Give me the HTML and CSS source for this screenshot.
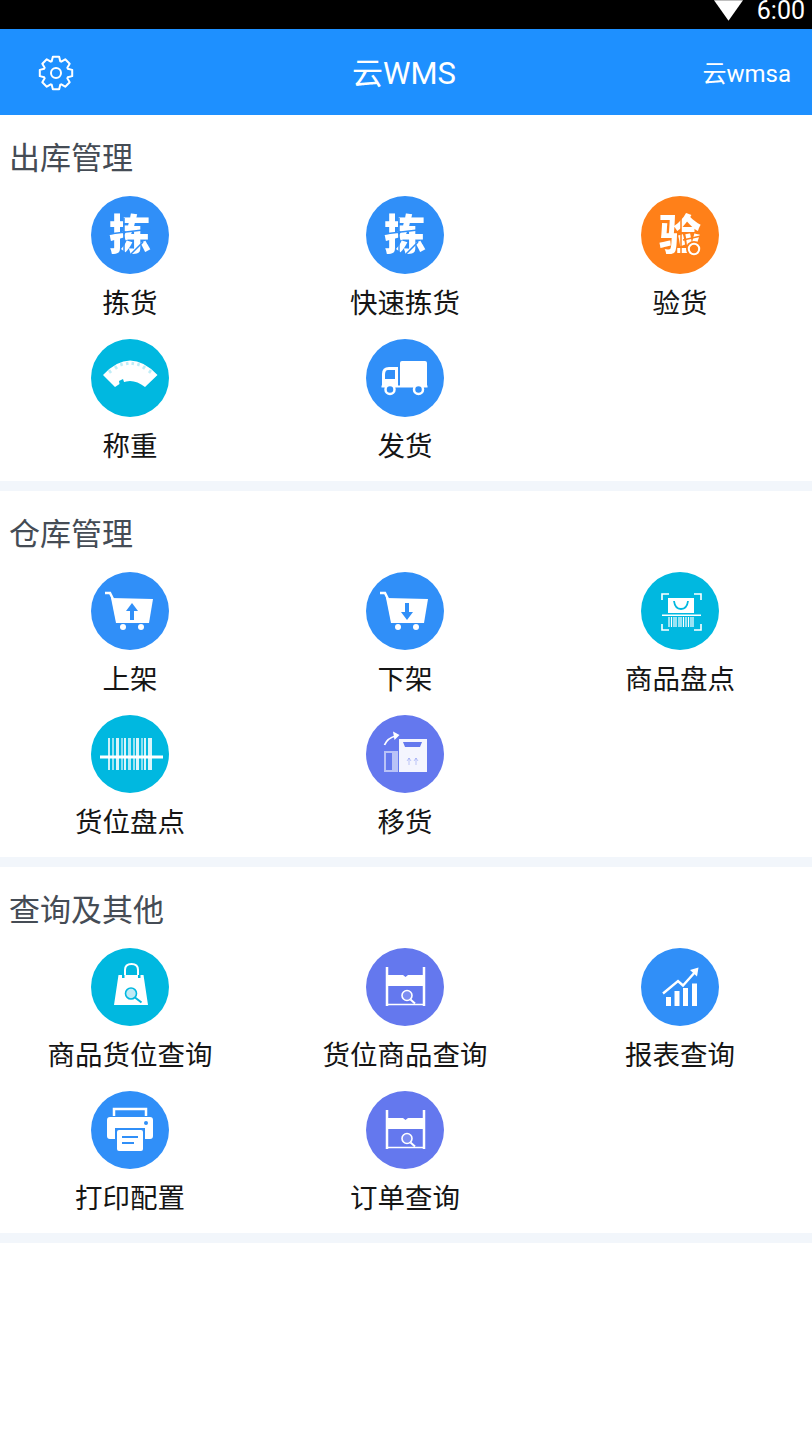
FILE: index.html
```html
<!DOCTYPE html>
<html lang="zh-CN">
<head>
<meta charset="utf-8">
<title>云WMS</title>
<link rel="stylesheet" href="styles.css">
</head>
<body>
<svg class="defs" width="0" height="0" aria-hidden="true">
  <defs>
    <symbol id="i-truck" viewBox="0 0 78 78">
      <path d="M34 24a2 2 0 0 1 2-2h23a2 2 0 0 1 2 2v24H34z" fill="#fff"/>
      <path fill-rule="evenodd" d="M23 28h9v20H16V35q0-7 7-7zm-1 3q-3 0-3 5v4h10v-9z" fill="#fff"/>
      <rect x="15.500" y="46.500" width="46" height="2" fill="#fff"/>
      <circle cx="24" cy="50.500" r="4.500" fill="#308ff8" stroke="#fff" stroke-width="2.500"/>
      <circle cx="52.500" cy="50.500" r="4.500" fill="#308ff8" stroke="#fff" stroke-width="2.500"/>
    </symbol>
    <symbol id="i-scale" viewBox="0 0 78 78">
      <path d="M12 36Q39 7 66.500 36L54 48Q39 36 24 48z" fill="#fff"/>
      <g stroke="#00b8e0" stroke-opacity=".25" stroke-width="2.500">
        <path d="M18 31l2 3M24 27l2 3M30 24l1 3M36 23l.5 3M42 23l-.5 3M48 24l-1 3M54 27l-2 3M60 31l-2 3"/>
      </g>
      <path d="M28 42l4-2 2 6-5 2z" fill="#00b8e0"/>
    </symbol>
    <symbol id="i-cart-up" viewBox="0 0 78 78">
      <path d="M14 21h5l3 6" fill="none" stroke="#fff" stroke-width="2.500"/>
      <path d="M20 26l42 1-4 24H25z" fill="#fff"/>
      <circle cx="32" cy="55" r="3" fill="#fff"/>
      <circle cx="50" cy="55" r="3" fill="#fff"/>
      <path d="M41 31l6 8h-4v9h-4v-9h-4z" fill="#308ff8"/>
    </symbol>
    <symbol id="i-cart-down" viewBox="0 0 78 78">
      <path d="M14 21h5l3 6" fill="none" stroke="#fff" stroke-width="2.500"/>
      <path d="M20 26l42 1-4 24H25z" fill="#fff"/>
      <circle cx="32" cy="55" r="3" fill="#fff"/>
      <circle cx="50" cy="55" r="3" fill="#fff"/>
      <path d="M41 48l6-8h-4v-9h-4v9h-4z" fill="#308ff8"/>
    </symbol>
    <symbol id="i-scan" viewBox="0 0 78 78">
      <path d="M21 28v-6h7M53 22h7v6M21 52v6h7M53 58h7v-6" fill="none" stroke="#fff" stroke-width="1.600"/>
      <path d="M27 26h26v15H27z" fill="#fff"/>
      <path d="M33 29q1 8 7 8t7-8" fill="none" stroke="#00b8e0" stroke-width="1.800"/>
      <rect x="21" y="42.500" width="39" height="1.500" fill="#fff"/>
      <path d="M28 45v10M30.500 45v10M33 45v10M35 45v10M38 45v10M40 45v10M42.500 45v10M45 45v10M47.500 45v10M50 45v10M52 45v10" stroke="#fff" stroke-width="1.200"/>
    </symbol>
    <symbol id="i-barcode" viewBox="0 0 78 78">
      <g fill="#fff">
        <rect x="17" y="23" width="2" height="32" opacity=".8"/>
        <rect x="21" y="23" width="2" height="32" opacity=".6"/>
        <rect x="25" y="23" width="3" height="32" opacity=".85"/>
        <rect x="30" y="23" width="2" height="32" opacity=".55"/>
        <rect x="33" y="23" width="2" height="32" opacity=".85"/>
        <rect x="37" y="23" width="3" height="32" opacity=".7"/>
        <rect x="42" y="23" width="2" height="32" opacity=".6"/>
        <rect x="45" y="23" width="3" height="32" opacity=".85"/>
        <rect x="50" y="23" width="2" height="32" opacity=".55"/>
        <rect x="53" y="23" width="2" height="32" opacity=".85"/>
        <rect x="57" y="23" width="4" height="32" opacity=".85"/>
        <rect x="9" y="40.500" width="63" height="3"/>
      </g>
    </symbol>
    <symbol id="i-move" viewBox="0 0 78 78">
      <path d="M33 24h28v33H33z" fill="#fff" fill-opacity=".93"/>
      <path d="M37 27h19l-2 5H39z" fill="#6478ee"/>
      <path d="M18 36h14v21H18z" fill="#fff" fill-opacity=".55"/>
      <path d="M20 38h6v17h-6z" fill="#6478ee"/>
      <path d="M42 46l2-3 2 3M44 43v7M49 46l2-3 2 3M51 43v7" fill="none" stroke="#6478ee" stroke-opacity=".5" stroke-width=".8" transform="translate(-1 0)"/>
      <path d="M18.500 30q3-7 11-9" fill="none" stroke="#fff" stroke-width="1.800"/>
      <path d="M27 16.500l6.500 3.500-5 5z" fill="#fff"/>
    </symbol>
    <symbol id="i-bag" viewBox="0 0 78 78">
      <path d="M34 27v-5q0-6 6.500-6t6.500 6v5" fill="none" stroke="#fff" stroke-width="2"/>
      <path d="M27.500 27H31v3h2.500v-3H47v3h2.500v-3h3L57 57H23z" fill="#fff"/>
      <circle cx="40" cy="45.500" r="5.500" fill="#bfeaf5" stroke="#00b8e0" stroke-width="1.600"/>
      <path d="M44 49.500l6.500 5" stroke="#00b8e0" stroke-width="2"/>
    </symbol>
    <symbol id="i-shelf" viewBox="0 0 78 78">
      <path d="M21 19v39M58 19v39" stroke="#fff" stroke-width="2.500"/>
      <path d="M21 27h16l2.500 2 2.500-2h16v11H21z" fill="#fff"/>
      <path d="M21 56.500h37" stroke="#fff" stroke-width="1.600"/>
      <circle cx="41" cy="47.500" r="5" fill="#7c8df1" stroke="#fff" stroke-width="1.600"/>
      <path d="M44.500 51.500l4.500 4" stroke="#fff" stroke-width="2"/>
    </symbol>
    <symbol id="i-chart" viewBox="0 0 78 78">
      <path d="M25 49h5v9h-5zM33.500 43h5v15h-5zM42 40h5v18h-5zM51 35.500h5V58h-5z" fill="#fff"/>
      <path d="M22 45.500L37 33l5 4.500L55 23" fill="none" stroke="#fff" stroke-width="2.400"/>
      <path d="M49 22l8.500-2.500-1.500 9z" fill="#fff"/>
    </symbol>
    <symbol id="i-printer" viewBox="0 0 78 78">
      <path d="M23 25v-7h32v7" fill="none" stroke="#fff" stroke-width="2.500"/>
      <path d="M19 26h40a3 3 0 0 1 3 3v16a3 3 0 0 1-3 3h-5v-11H24v11h-5a3 3 0 0 1-3-3V29a3 3 0 0 1 3-3z" fill="#fff"/>
      <rect x="26" y="39" width="26" height="21" rx="2" fill="#fff"/>
      <path d="M31 46h16M31 52h12" stroke="#308ff8" stroke-width="2"/>
      <circle cx="55" cy="32" r="2" fill="#308ff8"/>
    </symbol>
  </defs>
</svg>

<div class="status-bar">
  <svg class="wifi" width="30" height="21" viewBox="0 0 30 21" aria-hidden="true"><path d="M0 0h30L15 21z" fill="#fff"/></svg>
  <span class="clock">6:00</span>
</div>

<header class="app-bar">
  <div class="app-bar-left">
    <svg class="gear" width="36" height="36" viewBox="0 0 36 36" aria-hidden="true">
      <path d="M13.720 6.250L14.850 1.800H21.150L22.280 6.250L23.280 6.670L27.230 4.320L31.680 8.770L29.330 12.720L29.750 13.720L34.200 14.850V21.150L29.750 22.280L29.330 23.280L31.680 27.230L27.230 31.680L23.280 29.330L22.280 29.750L21.150 34.200H14.850L13.720 29.750L12.720 29.330L8.770 31.680L4.320 27.230L6.670 23.280L6.250 22.280L1.800 21.150V14.850L6.250 13.720L6.670 12.720L4.320 8.770L8.770 4.320L12.720 6.670z" fill="none" stroke="#fff" stroke-width="2" stroke-linejoin="round"/>
      <circle cx="18" cy="18" r="5" fill="none" stroke="#fff" stroke-width="2"/>
    </svg>
  </div>
  <div class="app-title">云WMS</div>
  <div class="app-user">云wmsa</div>
</header>

<main>
  <section class="group">
    <h2 class="group-title">出库管理</h2>
    <div class="grid">
      <a class="item"><span class="icon blue"><svg class="glyph" viewBox="0 0 78 78"><text x="39" y="54" class="char">拣</text><path d="M18 38l42-5M38 60l14-14M33 22v36" stroke="#308ff8" stroke-width="1.500"/></svg></span><span class="label">拣货</span></a>
      <a class="item"><span class="icon blue"><svg class="glyph" viewBox="0 0 78 78"><text x="39" y="54" class="char">拣</text><path d="M18 38l42-5M38 60l14-14M33 22v36" stroke="#308ff8" stroke-width="1.500"/></svg></span><span class="label">快速拣货</span></a>
      <a class="item"><span class="icon orange"><svg class="glyph" viewBox="0 0 78 78"><text x="39" y="54" class="char">验</text><path d="M40 22v36M42 44l18-4" stroke="#ff8019" stroke-width="1.500"/><circle cx="53" cy="53" r="8" fill="#ff8019"/><circle cx="53" cy="53" r="5.200" fill="none" stroke="#fff" stroke-width="2"/></svg></span><span class="label">验货</span></a>
      <a class="item"><span class="icon cyan"><svg class="glyph"><use href="#i-scale"/></svg></span><span class="label">称重</span></a>
      <a class="item"><span class="icon blue"><svg class="glyph"><use href="#i-truck"/></svg></span><span class="label">发货</span></a>
    </div>
  </section>

  <section class="group">
    <h2 class="group-title">仓库管理</h2>
    <div class="grid">
      <a class="item"><span class="icon blue"><svg class="glyph"><use href="#i-cart-up"/></svg></span><span class="label">上架</span></a>
      <a class="item"><span class="icon blue"><svg class="glyph"><use href="#i-cart-down"/></svg></span><span class="label">下架</span></a>
      <a class="item"><span class="icon cyan"><svg class="glyph"><use href="#i-scan"/></svg></span><span class="label">商品盘点</span></a>
      <a class="item"><span class="icon cyan"><svg class="glyph"><use href="#i-barcode"/></svg></span><span class="label">货位盘点</span></a>
      <a class="item"><span class="icon purple"><svg class="glyph"><use href="#i-move"/></svg></span><span class="label">移货</span></a>
    </div>
  </section>

  <section class="group">
    <h2 class="group-title">查询及其他</h2>
    <div class="grid">
      <a class="item"><span class="icon cyan"><svg class="glyph"><use href="#i-bag"/></svg></span><span class="label">商品货位查询</span></a>
      <a class="item"><span class="icon purple"><svg class="glyph"><use href="#i-shelf"/></svg></span><span class="label">货位商品查询</span></a>
      <a class="item"><span class="icon blue"><svg class="glyph"><use href="#i-chart"/></svg></span><span class="label">报表查询</span></a>
      <a class="item"><span class="icon blue"><svg class="glyph"><use href="#i-printer"/></svg></span><span class="label">打印配置</span></a>
      <a class="item"><span class="icon purple"><svg class="glyph"><use href="#i-shelf"/></svg></span><span class="label">订单查询</span></a>
    </div>
  </section>
</main>
</body>
</html>
```
FILE: styles.css
```css
* {
  box-sizing: border-box;
}

html,
body {
  margin: 0;
  padding: 0;
  background: #fff;
}

body {
  width: 812px;
  height: 1456px;
  overflow: hidden;
  font-family: Roboto, "Noto Sans CJK SC", sans-serif;
}

.defs {
  display: block;
  height: 0;
}

.status-bar {
  height: 29px;
  background: #000;
  display: flex;
  justify-content: flex-end;
  align-items: flex-start;
  gap: 14px;
  padding-right: 7px;
  color: #fff;
}

.wifi {
  display: block;
  width: 29px;
}

.clock {
  font-size: 25px;
  line-height: 21px;
}

.app-bar {
  height: 86px;
  background: #1e90ff;
  color: #fff;
  display: grid;
  grid-template-columns: 1fr auto 1fr;
  align-items: center;
  padding: 4px 21px 0 20px;
}

.app-bar-left {
  display: flex;
  align-items: center;
}

.gear {
  display: block;
  margin: 0 0 2px 18px;
}

.app-title {
  font-size: 31px;
  line-height: 40px;
  margin-left: -3px;
}

.app-user {
  font-size: 24px;
  line-height: 34px;
  text-align: right;
}

.group {
  padding: 22px 0 4px;
  border-bottom: 10px solid #f2f6fb;
}

.group-title {
  margin: 0 0 15px;
  padding-left: 9px;
  font-size: 31px;
  line-height: 44px;
  font-weight: 400;
  color: #454c55;
}

.grid {
  display: grid;
  grid-template-columns: repeat(3, 260px);
  column-gap: 15px;
  row-gap: 5px;
}

.item {
  display: flex;
  flex-direction: column;
  align-items: center;
}

.icon {
  display: block;
  width: 78px;
  height: 78px;
  border-radius: 50%;
}

.blue {
  background: #308ff8;
}

.orange {
  background: #ff8019;
}

.cyan {
  background: #00b8e0;
}

.purple {
  background: #6478ee;
}

.glyph {
  display: block;
  width: 78px;
  height: 78px;
  filter: blur(0.5px);
}

.char {
  fill: #fff;
  font-family: "Noto Sans CJK SC", sans-serif;
  font-size: 42px;
  font-weight: 900;
  text-anchor: middle;
}

.label {
  display: block;
  height: 60px;
  font-size: 27.5px;
  line-height: 60px;
  color: #151515;
  white-space: nowrap;
}
```
